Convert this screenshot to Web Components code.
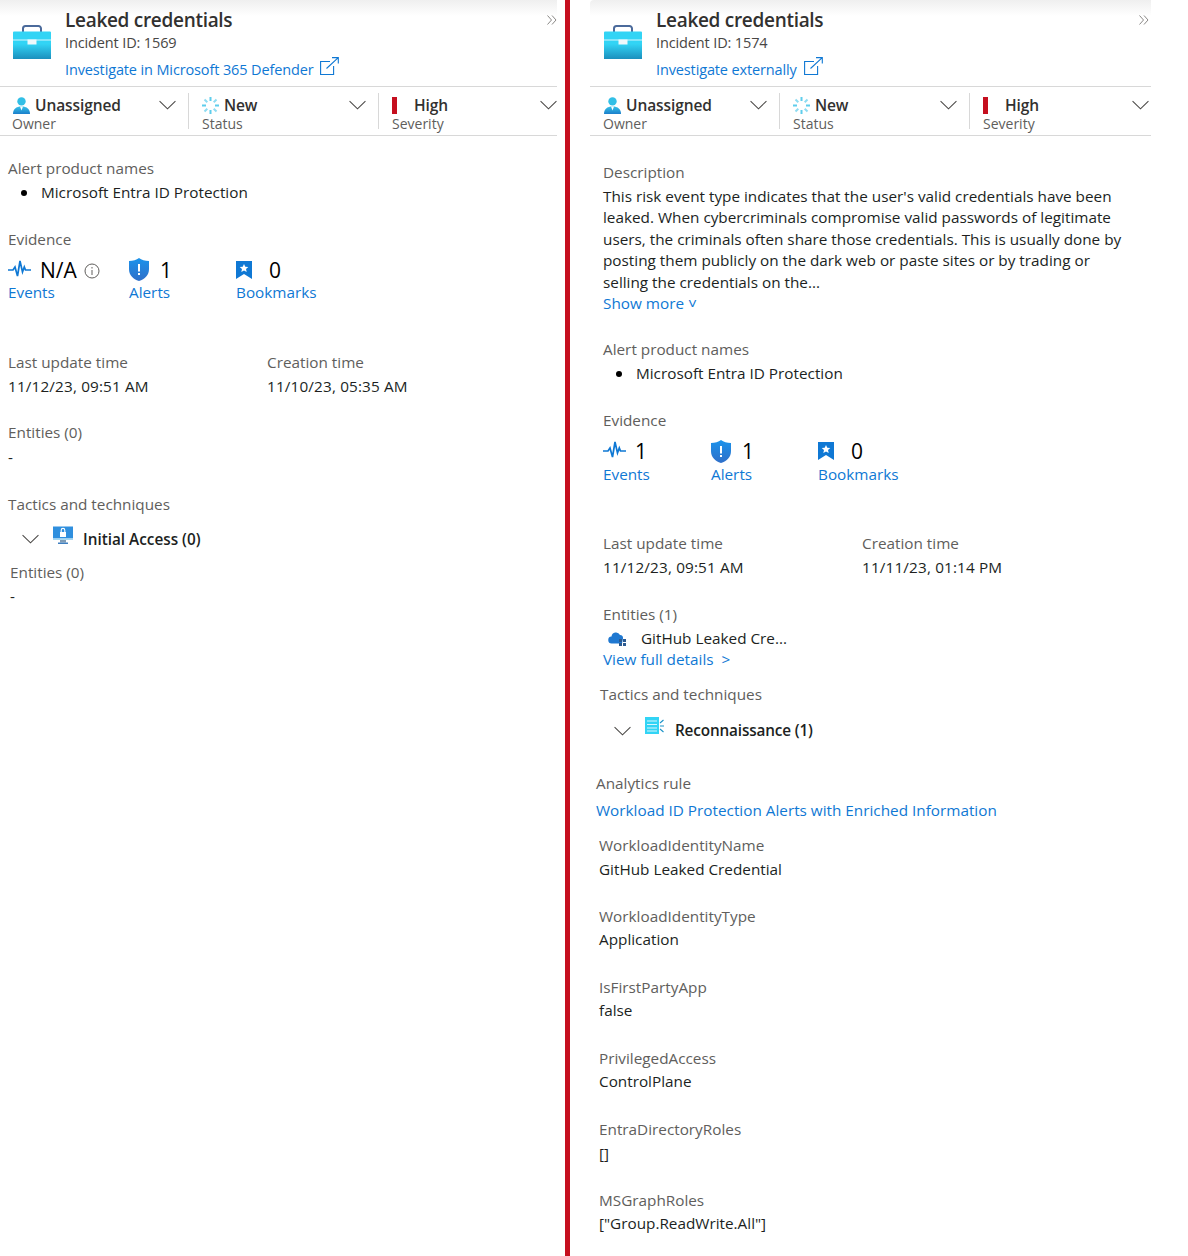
<!DOCTYPE html>
<html>
<head>
<meta charset="utf-8">
<title>Incident panels</title>
<style>
  html, body { margin: 0; background: #fff; }
  body { font: 15.3px/21px "Open Sans", "Liberation Sans", sans-serif; color: #201f1e; }
</style>
</head>
<body>
<incident-page>
  <incident-panel slot="left" name="Leaked credentials" incident="1569" link="Investigate in Microsoft 365 Defender" style="--pad:8px;--alerts-offset:121px;--col1:189px;--col2:190px;--owner-pad:13px;--last-pad:0px;--more-right:0px;--ev-gap:7px;--tactic-pad:14px;--head-radius:0">
    <info-field style="margin-top:22px" label="Alert product names"><bullet-item>Microsoft Entra ID Protection</bullet-item></info-field>
    <evidence-row style="margin-top:26px" events="N/A" note></evidence-row>
    <time-row style="margin-top:49px" updated="11/12/23, 09:51 AM" created="11/10/23, 05:35 AM"></time-row>
    <info-field style="margin-top:24px;--gap:4px" label="Entities (0)">-</info-field>
    <info-field style="margin-top:26px" label="Tactics and techniques"></info-field>
    <tactic-row style="margin-top:6px" name="Initial Access (0)" kind="access"></tactic-row>
    <info-field style="margin-top:5px;margin-left:2px" label="Entities (0)">-</info-field>
  </incident-panel>
  <incident-panel slot="right" name="Leaked credentials" incident="1574" link="Investigate externally" style="--pad:13px;--alerts-offset:108px;--col1:190px;--col2:190px;--owner-pad:14px;--last-pad:2px;--more-right:2px;--ev-gap:8px;--tactic-pad:11px;--head-radius:4px">
    <info-field style="margin-top:26px" label="Description">
      <div style="width:522px;margin-top:2px">This risk event type indicates that the user's valid credentials have been leaked. When cybercriminals compromise valid passwords of legitimate users, the criminals often share those credentials. This is usually done by posting them publicly on the dark web or paste sites or by trading or selling the credentials on the...</div>
      <a-link>Show more ˅</a-link>
    </info-field>
    <info-field style="margin-top:25px" label="Alert product names"><bullet-item style="margin-top:1px">Microsoft Entra ID Protection</bullet-item></info-field>
    <evidence-row style="margin-top:25px" events="1"></evidence-row>
    <time-row style="margin-top:48px" updated="11/12/23, 09:51 AM" created="11/11/23, 01:14 PM"></time-row>
    <info-field style="margin-top:26px" label="Entities (1)">
      <div style="display:flex;align-items:center;height:21px"><entity-icon></entity-icon>GitHub Leaked Cre...</div>
      <a-link>View full details&nbsp; &gt;</a-link>
    </info-field>
    <info-field style="margin-top:13px;margin-left:-3px" label="Tactics and techniques"></info-field>
    <tactic-row style="margin-top:8px;letter-spacing:-.15px" name="Reconnaissance (1)" kind="recon"></tactic-row>
    <info-field style="margin-top:24px;margin-left:-7px" label="Analytics rule"><a-link style="margin-top:6px">Workload ID Protection Alerts with Enriched Information</a-link></info-field>
    <info-field style="margin-top:14px;margin-left:-4px" label="WorkloadIdentityName">GitHub Leaked Credential</info-field>
    <info-field style="margin-top:26px;margin-left:-4px;--gap:2px" label="WorkloadIdentityType">Application</info-field>
    <info-field style="margin-top:26px;margin-left:-4px;--gap:2px" label="IsFirstPartyApp">false</info-field>
    <info-field style="margin-top:27px;margin-left:-4px;--gap:2px" label="PrivilegedAccess">ControlPlane</info-field>
    <info-field style="margin-top:26px;margin-left:-4px" label="EntraDirectoryRoles">[]</info-field>
    <info-field style="margin-top:26px;margin-left:-4px;--gap:2px" label="MSGraphRoles">["Group.ReadWrite.All"]</info-field>
  </incident-panel>
</incident-page>
<script>
const ICONS = {
  briefcase: `<svg width="38" height="34" viewBox="0 0 38 34"><defs><linearGradient id="caseGrad" x1="0" y1="0" x2="0" y2="1"><stop offset="0" stop-color="#32d4f5"/><stop offset=".45" stop-color="#32d4f5"/><stop offset="1" stop-color="#1b8fbd"/></linearGradient></defs><path d="M10 7V3.500A2.500 2.500 0 0 1 12.500 1h13A2.500 2.500 0 0 1 28 3.500V7" fill="none" stroke="#4b6a9b" stroke-width="2"/><path d="M1 6.500h36a1 1 0 0 1 1 1V34H0V7.500a1 1 0 0 1 1-1z" fill="url(#caseGrad)"/><path d="M0 15h38" stroke="#fff" stroke-opacity=".8" stroke-width="1"/><path d="M14.500 14.500h9v5h-9z" fill="#eef9fc"/></svg>`,
  person: `<svg width="17" height="17" viewBox="0 0 17 17"><defs><linearGradient id="personGrad" x1="0" y1="0" x2="0" y2="1"><stop offset="0" stop-color="#37c2e8"/><stop offset="1" stop-color="#1b7fcb"/></linearGradient></defs><circle cx="8.500" cy="4.400" r="4.200" fill="#32bfe6"/><path d="M0 17c0-5 3-7.500 8.500-7.500S17 12 17 17z" fill="url(#personGrad)"/><path d="M7 9.600h3l-1.500 4z" fill="#fff"/></svg>`,
  spinner: `<svg width="17" height="17" viewBox="0 0 17 17" stroke-width="2" stroke="#5fcdec"><path d="M8.500 0v4M8.500 13v4M0 8.500h4M13 8.500h4"/><path d="M2.500 2.500l2.800 2.800M11.700 11.700l2.800 2.800M14.500 2.500l-2.800 2.800M5.300 11.700l-2.800 2.800" stroke="#8fdcf2"/></svg>`,
  chevron: `<svg width="17" height="10" viewBox="0 0 18 10" style="display:block"><path d="M.6.800 9 9l8.400-8.200" fill="none" stroke="#484644" stroke-width="1.100"/></svg>`,
  external: `<svg width="19" height="18" viewBox="0 0 19 18" fill="none" stroke="#0f78d4" stroke-width="1.100"><path d="M10 4.500H.6v13h13V9"/><path d="M6.500 11.500 18 .8M12 .6h6.300v6"/></svg>`,
  collapse: `<svg width="10" height="10" viewBox="0 0 10 10" fill="none" stroke="#8a8886"><path d="M.5.500 4.500 5l-4 4.500M5 .5 9 5l-4 4.500"/></svg>`,
  activity: `<svg width="23" height="17" viewBox="0 0 23 17" fill="none" stroke="#0f78d4" stroke-width="1.700"><path d="M0 10h5l2-3 2.500 9L12 1l2.500 11 1.800-5 1.200 3H23"/></svg>`,
  info: `<svg width="16" height="16" viewBox="0 0 16 16" fill="none" stroke="#605e5c"><circle cx="8" cy="8" r="7"/><path d="M8 7v5M8 4v1.500"/></svg>`,
  shield: `<svg width="20" height="23" viewBox="0 0 20 23"><defs><linearGradient id="shieldGrad" x1="0" y1="0" x2="0" y2="1"><stop offset="0" stop-color="#1b93eb"/><stop offset="1" stop-color="#2f6fc9"/></linearGradient></defs><path d="M10 0c2.500 2 6 3 10 3v8c0 6-4 10-10 12C4 21 0 17 0 11V3c4 0 7.500-1 10-3z" fill="url(#shieldGrad)"/><path d="M9 6h2v7.500H9zM9 15h2v2H9z" fill="#fff"/></svg>`,
  bookmark: `<svg width="16" height="18" viewBox="0 0 16 18"><path d="M0 0h16v18l-8-5-8 5z" fill="#0f78d4"/><path d="m8 3 1.300 2.800 3 .3-2.300 2 .7 3L8 9.500l-2.700 1.600.7-3-2.300-2 3-.3z" fill="#fff"/></svg>`,
  access: `<svg width="20" height="20" viewBox="0 0 20 20"><path d="M0 1.500h20v12H0z" fill="#2f8fde"/><path d="M0 13.500h20V15H0z" fill="#a5d8f2"/><path d="M7 15h6v2.500H7z" fill="#7f9cb5"/><path d="M5 17.500h10V19H5z" fill="#3f7fc0"/><path d="M7 7h6v5H7z" fill="#fff"/><path d="M8.200 7V5.200a1.800 1.800 0 0 1 3.600 0V7" fill="none" stroke="#fff" stroke-width="1.100"/></svg>`,
  recon: `<svg width="19" height="18" viewBox="0 0 19 18"><path d="M0 0h14v17H0z" fill="#32d4f5"/><path d="M2 4h10M2 7.500h10M2 11h10M2 14h10" stroke="#d8f6fd" stroke-width="1.200"/><path d="m15 6 3.500-3M15 9h4M15 12l3.500 3" stroke="#1b93c8" stroke-width="1.100"/></svg>`,
  cloud: `<svg width="20" height="15" viewBox="0 0 20 15"><path d="M4 12.500a3.500 3.500 0 0 1-.5-7A4.500 4.500 0 0 1 12 4a3.200 3.200 0 0 1 3 3.500l-1 5z" fill="#1f78d1"/><path d="M11 8h3v3h-3zM15 8h3v3h-3zM11 12h3v3h-3zM15 12h3v3h-3z" fill="#2b5a91"/></svg>`
}

/**
 * Puts the two panels and the red divider next to each other.
 */
customElements.define('incident-page',
  class extends HTMLElement {
    constructor () {
      super()
      this.attachShadow({ mode: 'open' }).innerHTML = `
        <style>
          :host { display: flex; height: 1256px; overflow: hidden; }
          ::slotted([slot=left]) { width: 557px; }
          ::slotted([slot=right]) { width: 561px; }
          #bar { width: 5px; background: #c50f1f; margin: 0 20px 0 8px; }
        </style>
        <slot name="left"></slot><div id="bar"></div><slot name="right"></slot>`
    }
  }
)

/**
 * One incident: header, the three dropdowns, and the slotted details.
 */
customElements.define('incident-panel',
  class extends HTMLElement {
    constructor () {
      super()
      const a = (n) => this.getAttribute(n)
      this.attachShadow({ mode: 'open' }).innerHTML = `
        <style>
          :host { display: block; }
          header { height: 87px; box-sizing: border-box; display: flex; padding: 7px 0 0 var(--owner-pad); position: relative; background: linear-gradient(#efefef, #fff 16px); border-bottom: 1px solid #d8d8d8; border-top-left-radius: var(--head-radius); letter-spacing: -0.13px; font-size: 14.5px; }
          #case { margin: 18px 14px 0 0; }
          h1 { margin: 0; font-size: 19px; line-height: 27px; font-weight: 600; letter-spacing: -0.3px; color: #323130; }
          #id { line-height: 20px; color: #484644; font-weight: 500; margin-top: -1px; }
          #go { display: flex; gap: 7px; color: #0f78d4; line-height: 20px; margin-top: 7px; }
          #go svg { margin-top: -3px; }
          #more { position: absolute; right: var(--more-right); top: 9px; }
          #bar { display: grid; grid-template-columns: var(--col1) var(--col2) 1fr; height: 48px; border-bottom: 1px solid #d8d8d8; }
          #body { padding-left: var(--pad); }
        </style>
        <header>
          <div id="case">${ICONS.briefcase}</div>
          <div>
            <h1>${a('name')}</h1>
            <div id="id">Incident ID: ${a('incident')}</div>
            <div id="go">${a('link')} ${ICONS.external}</div>
          </div>
          <div id="more">${ICONS.collapse}</div>
        </header>
        <div id="bar">
          <drop-pick value="Unassigned" caption="Owner" kind="person"></drop-pick>
          <drop-pick value="New" caption="Status" kind="spinner"></drop-pick>
          <drop-pick value="High" caption="Severity" kind="severity" last></drop-pick>
        </div>
        <div id="body"><slot></slot></div>`
    }
  }
)

/**
 * A value with caption and a chevron, as used for owner, status and severity.
 */
customElements.define('drop-pick',
  class extends HTMLElement {
    constructor () {
      super()
      const kind = this.getAttribute('kind')
      const icon = kind === 'severity' ? '<i id="sev"></i>' : ICONS[kind]
      this.attachShadow({ mode: 'open' }).innerHTML = `
        <style>
          :host { display: grid; grid-template-columns: 1fr auto; grid-template-rows: 24px 14px; box-sizing: border-box; height: 36px; margin-top: 6px; padding: 0 12px 0 13px; border-right: 1px solid #d8d8d8; }
          :host([kind=person]) { padding-left: var(--owner-pad); }
          :host([last]) { border-right: 0; padding-right: var(--last-pad); }
          #top { display: flex; align-items: center; gap: 5px; height: 25px; font-size: 15.500px; font-weight: 600; letter-spacing: -0.1px; color: #323130; }
          :host([kind=severity]) #top { gap: 17px; }
          #sev { width: 5px; height: 17px; background: #c50f1f; }
          #cap { grid-column: 1 / 3; font-size: 14px; line-height: 14px; color: #605e5c; }
          :host([kind=person]) #cap { margin-left: -1px; }
          #chev { margin-top: 7px; }
        </style>
        <div id="top">${icon}<span>${this.getAttribute('value')}</span></div>
        <div id="chev">${ICONS.chevron}</div>
        <div id="cap">${this.getAttribute('caption')}</div>`
    }
  }
)

/**
 * A grey label with whatever value is slotted below it.
 */
customElements.define('info-field',
  class extends HTMLElement {
    constructor () {
      super()
      this.attachShadow({ mode: 'open' }).innerHTML = `
        <style>
          :host { display: block; }
          #label { color: #605e5c; line-height: 21px; margin-bottom: var(--gap, 3px); }
          #value { display: block; line-height: 21.400px; }
        </style>
        <div id="label">${this.getAttribute('label')}</div>
        <div id="value"><slot></slot></div>`
    }
  }
)

customElements.define('bullet-item',
  class extends HTMLElement {
    constructor () {
      super()
      this.attachShadow({ mode: 'open' }).innerHTML = `
        <style>
          :host { display: flex; align-items: center; gap: 14px; padding-left: 13px; }
          i { width: 6px; height: 6px; border-radius: 50%; background: #000; }
        </style>
        <i></i><span><slot></slot></span>`
    }
  }
)

customElements.define('a-link',
  class extends HTMLElement {
    constructor () {
      super()
      this.attachShadow({ mode: 'open' }).innerHTML = `
        <style>
          :host { display: block; color: #0f78d4; }
        </style>
        <slot></slot>`
    }
  }
)

customElements.define('entity-icon',
  class extends HTMLElement {
    constructor () {
      super()
      this.attachShadow({ mode: 'open' }).innerHTML = `
        <style>
          :host { display: block; margin: -3px 13px 0 5px; height: 15px; }
        </style>
        ${ICONS.cloud}`
    }
  }
)

/**
 * The counters for events, alerts and bookmarks.
 */
customElements.define('evidence-row',
  class extends HTMLElement {
    constructor () {
      super()
      const note = this.hasAttribute('note') ? `<span id="note">${ICONS.info}</span>` : ''
      this.attachShadow({ mode: 'open' }).innerHTML = `
        <style>
          :host { display: block; }
          #label { color: #605e5c; line-height: 21px; }
          #row { display: flex; margin-top: var(--ev-gap); }
          .item { width: 107px; }
          .item:first-child { width: var(--alerts-offset); }
          .top { display: flex; align-items: center; height: 25px; }
          .num { font-size: 21px; color: #000; padding-top: 1px; }
          .cap { color: #0f78d4; line-height: 21px; }
          #ev svg { margin: -3px 9px 0 0; }
          #al svg { margin-right: 11px; }
          #bk svg { margin-right: 17px; }
          #note { margin: 3px 0 0 7px; height: 16px; }
          #note svg { display: block; margin: 0; }
        </style>
        <div id="label">Evidence</div>
        <div id="row">
          <div class="item" id="ev"><div class="top">${ICONS.activity}<span class="num">${this.getAttribute('events')}</span>${note}</div><div class="cap">Events</div></div>
          <div class="item" id="al"><div class="top">${ICONS.shield}<span class="num">1</span></div><div class="cap">Alerts</div></div>
          <div class="item" id="bk"><div class="top">${ICONS.bookmark}<span class="num">0</span></div><div class="cap">Bookmarks</div></div>
        </div>`
    }
  }
)

customElements.define('time-row',
  class extends HTMLElement {
    constructor () {
      super()
      this.attachShadow({ mode: 'open' }).innerHTML = `
        <style>
          :host { display: grid; grid-template-columns: 259px 1fr; }
          span { letter-spacing: .15px; }
        </style>
        <info-field label="Last update time"><span>${this.getAttribute('updated')}</span></info-field>
        <info-field label="Creation time"><span>${this.getAttribute('created')}</span></info-field>`
    }
  }
)

/**
 * An expanded tactic with its icon.
 */
customElements.define('tactic-row',
  class extends HTMLElement {
    constructor () {
      super()
      this.attachShadow({ mode: 'open' }).innerHTML = `
        <style>
          :host { display: flex; align-items: center; height: 36px; padding-left: var(--tactic-pad); font-weight: 600; color: #201f1e; }
          #ic { margin: -8px 10px 0 14px; height: 20px; }
          :host([kind=recon]) #ic { margin-right: 11px; }
        </style>
        <div id="ch">${ICONS.chevron}</div>
        <div id="ic">${ICONS[this.getAttribute('kind')]}</div>
        <span>${this.getAttribute('name')}</span>`
    }
  }
)
</script>
</body>
</html>
